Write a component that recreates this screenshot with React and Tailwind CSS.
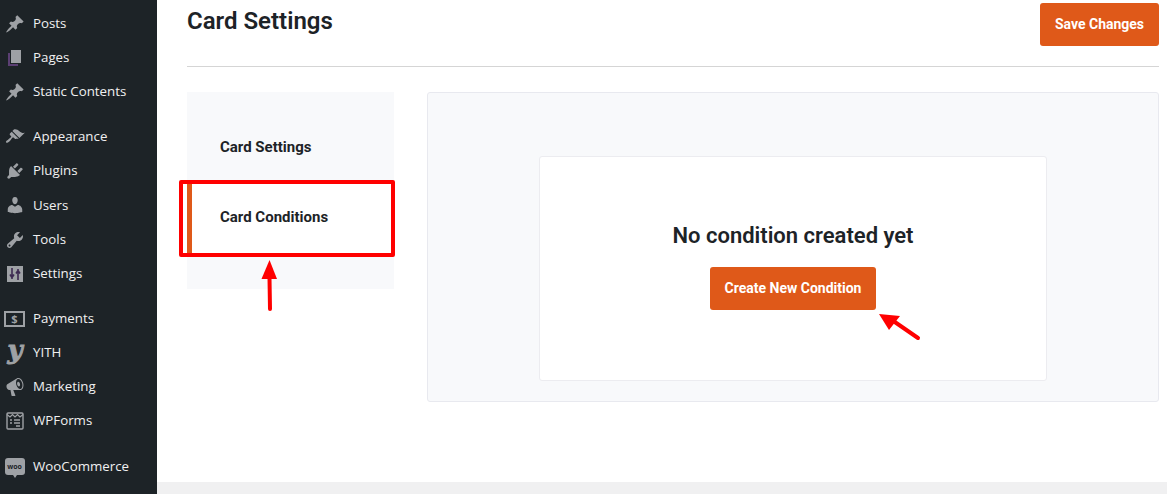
const Dash = ({ d, size = 20, extra }) => (
  <svg width={size} height={size} viewBox="0 0 20 20" fill="currentColor">
    <path d={d} />
    {extra}
  </svg>
);

const PIN = 'M10.44 3.02l1.82-1.82 6.36 6.35-1.83 1.82c-1.05-.68-2.48-.57-3.41.36l-.75.75c-.92.93-1.04 2.35-.35 3.41l-1.83 1.82-2.41-2.41-2.8 2.79c-.42.42-3.38 2.71-3.8 2.29s1.86-3.39 2.28-3.81l2.79-2.79L4.1 9.36l1.83-1.82c1.05.69 2.48.57 3.4-.36l.75-.75c.93-.92 1.05-2.35.36-3.41z';
const BRUSH = 'M14.48 11.06L7.41 3.99l1.5-1.5c.5-.56 2.3-.47 3.51.32 1.21.8 1.43 1.28 2.91 2.1 1.18.64 2.45 1.26 4.45.85zm-.71.71L6.7 4.7 4.93 6.47c-.39.39-.39 1.02 0 1.41l1.06 1.06c.39.39.39 1.03 0 1.42-.6.6-1.43 1.11-2.21 1.69-.35.26-.7.53-1.01.84C1.43 13.23.4 14.85 1.15 15.6c.75.75 2.37-.28 3.71-1.62.31-.31.58-.66.84-1.01.58-.78 1.09-1.61 1.69-2.21.39-.39 1.02-.39 1.41 0l1.06 1.06c.39.39 1.02.39 1.41 0z';
const PLUG = 'M13.11 4.36L9.87 7.6 8 5.73l3.24-3.24c.35-.34 1.05-.2 1.56.32.52.51.66 1.21.31 1.55zm-8 1.77l.91-1.12 9.01 9.01-1.19.84c-.71.71-2.63 1.16-3.82 1.16H6.14L4.9 17.26c-.59.59-1.54.59-2.12 0-.59-.58-.59-1.53 0-2.12l1.24-1.24v-3.88c0-1.13.4-3.19 1.09-3.89zm7.26 3.97l3.24-3.24c.34-.35 1.04-.21 1.55.31.52.51.66 1.21.31 1.55l-3.24 3.25z';
const USER = 'M10 9.25c-2.27 0-2.73-3.44-2.73-3.44C7 4.02 7.82 2 9.97 2c2.16 0 2.98 2.02 2.71 3.81 0 0-.41 3.44-2.68 3.44zm0 2.57L12.72 10c2.39 0 4.52 2.33 4.52 4.53v2.49s-3.65 1.13-7.24 1.13c-3.65 0-7.24-1.13-7.24-1.13v-2.49c0-2.25 1.94-4.48 4.47-4.48z';
const WRENCH = 'M16.68 9.77c-1.34 1.34-3.3 1.67-4.95.99l-5.41 6.52c-.99.99-2.59.99-3.58 0s-.99-2.59 0-3.57l6.52-5.42c-.68-1.65-.35-3.61.99-4.95 1.28-1.28 3.12-1.62 4.72-1.06l-2.89 2.89 2.82 2.82 2.86-2.87c.53 1.58.18 3.39-1.08 4.65zM3.81 16.21c.4.39 1.04.39 1.43 0 .4-.4.4-1.04 0-1.43-.39-.4-1.03-.4-1.43 0-.39.39-.39 1.03 0 1.43z';
const MEGAPHONE = 'M18.15 5.94c.46 1.62.38 3.22-.02 4.48-.42 1.28-1.26 2.18-2.3 2.48-.16.06-.26.06-.4.06-.06.02-.12.02-.18.02-.06.02-.14.02-.22.02h-6.8l2.22 5.5c.02.14-.06.26-.14.34-.08.1-.24.16-.34.16H6.95c-.1 0-.26-.06-.34-.16-.08-.08-.16-.2-.14-.34l-1-5.5H4.25l-.02-.02c-.5.06-1.08-.18-1.54-.62s-.88-1.08-1.06-1.88c-.24-.8-.2-1.56-.02-2.2.18-.62.58-1.08 1.06-1.3l.02-.02 9-5.4c.1-.06.18-.1.24-.16.06-.04.14-.08.24-.12.16-.08.28-.12.5-.18 1.04-.3 2.24.1 3.22 1 .98.88 1.8 2.24 2.26 3.86zm-2.58 5.98h-.02c.4-.1.74-.34 1.04-.7.58-.7.86-1.76.86-3.04-.02-.64-.1-1.3-.28-1.98-.34-1.36-1.02-2.5-1.78-3.24s-1.68-1.1-2.46-.88c-.82.22-1.4.96-1.7 2-.32 1.04-.28 2.36.06 3.72.38 1.36 1 2.52 1.8 3.24.78.74 1.62 1.1 2.48.88zm-2.54-7.08c.22-.04.42-.02.62.04.38.16.76.48 1.02 1s.42 1.2.42 1.78c0 .3-.04.56-.12.8-.18.48-.44.84-.86.94-.34.1-.8-.06-1.14-.4s-.64-.86-.78-1.5c-.18-.62-.12-1.24.02-1.72s.48-.84.82-.94z';

const PagesIcon = () => (
  <svg width="20" height="20" viewBox="0 0 20 20">
    <path d="M5 16h8v2H3V5h2z" fill="#5b3f73" />
    <path d="M6 15V2h10v13z" fill="currentColor" />
  </svg>
);

const SettingsIcon = () => (
  <svg width="20" height="20" viewBox="0 0 20 20">
    <path d="M2 2h16v16H2z" fill="currentColor" />
    <path d="M7 4v11M5 10.5l2 3 2-3M13 16V5M11 9.5l2-3 2 3" stroke="#3d2a52" strokeWidth="1.6" fill="none" />
  </svg>
);

const PaymentsIcon = () => (
  <div className="-ml-[1px] flex h-[16px] w-[21px] items-center justify-center border-2 border-current text-[11px] leading-none font-bold">
    <span>$</span>
  </div>
);

const YithIcon = () => (
  <span className="-mt-[7px] font-['DejaVu_Serif',serif] text-[26px] leading-none font-bold italic [-webkit-text-stroke:1px_currentColor]">y</span>
);

const FormsIcon = () => (
  <svg width="18" height="18" viewBox="0 0 18 18" fill="none" stroke="currentColor">
    <rect x="1" y="1" width="16" height="16" rx="1" strokeWidth="1.4" />
    <path d="M1 2.5l3 2.5 2.5-2.5L9 5l2.5-2.5L14 5l3-2.5" strokeWidth="1.2" />
    <path d="M4 8h2M8 8h6M4 11h2M8 11h6M10 14h4" strokeWidth="1.6" />
  </svg>
);

const WooIcon = () => (
  <div className="relative -ml-[1px] flex h-[17px] w-[20px] items-center justify-center rounded-[3px] bg-[#9ea1a5]">
    <span className="text-[7px] leading-none font-bold text-[#1d2327]">woo</span>
    <div className="absolute -bottom-[3px] left-[8px] h-0 w-0 border-x-[2px] border-t-[3px] border-x-transparent border-t-[#9ea1a5]" />
  </div>
);

const menuGroups = [
  [
    { label: 'Posts', icon: <Dash d={PIN} /> },
    { label: 'Pages', icon: <PagesIcon /> },
    { label: 'Static Contents', icon: <Dash d={PIN} /> },
  ],
  [
    { label: 'Appearance', icon: <Dash d={BRUSH} /> },
    { label: 'Plugins', icon: <Dash d={PLUG} /> },
    { label: 'Users', icon: <Dash d={USER} /> },
    { label: 'Tools', icon: <Dash d={WRENCH} /> },
    { label: 'Settings', icon: <SettingsIcon /> },
  ],
  [
    { label: 'Payments', icon: <PaymentsIcon /> },
    { label: 'YITH', icon: <YithIcon /> },
    { label: 'Marketing', icon: <Dash d={MEGAPHONE} /> },
    { label: 'WPForms', icon: <FormsIcon /> },
  ],
  [{ label: 'WooCommerce', icon: <WooIcon /> }],
];

const Sidebar = () => (
  <aside className="flex h-[494px] w-[157px] shrink-0 flex-col gap-[10.85px] overflow-hidden bg-[#1d2327] pt-[6.6px] font-['Open_Sans',sans-serif] text-[13.3px] text-[#f0f0f1]">
    {menuGroups.map((group, i) => (
      <div key={i} className="flex flex-col">
        {group.map((item) => (
          <div key={item.label} className="flex h-[34.2px] items-center">
            <div className="flex w-[33px] justify-center pr-[3px] text-[#9ea1a5]">{item.icon}</div>
            <span>{item.label}</span>
          </div>
        ))}
      </div>
    ))}
  </aside>
);

const RedArrow = ({ className, x1, y1, x2, y2, points, width, height }) => (
  <svg className={className} width={width} height={height}>
    <line x1={x1} y1={y1} x2={x2} y2={y2} stroke="#ff0000" strokeWidth="4" strokeLinecap="round" />
    <polygon points={points} fill="#ff0000" />
  </svg>
);

export default function App() {
  return (
    <div className="relative flex h-[494px] w-[1167px] overflow-hidden bg-white font-['Roboto',sans-serif] text-[#1d2327]">
      <Sidebar />
      <main className="flex flex-1 flex-col">
        <div className="flex-1 pr-[8px] pl-[30px]">
          <div className="flex h-[67px] items-start justify-between border-b border-[#d5d5d5] pt-[3px]">
            <h1 className="-mt-[3px] text-[24px] leading-[42px] font-semibold">Card Settings</h1>
            <button className="h-[43px] w-[119px] rounded-[3px] bg-[#df5919] text-[14px] font-bold text-white">
              Save Changes
            </button>
          </div>
          <div className="mt-[25px] flex items-start gap-[33px]">
            <nav className="flex h-[197px] w-[207px] flex-col bg-[#f8f9fb] pt-[20px] text-[15px] font-bold">
              <div className="flex h-[69px] items-center pt-[1px] pl-[33px]">Card Settings</div>
              <div className="flex h-[72px] items-center border-l-[5px] border-[#df5919] bg-white pl-[28px]">Card Conditions</div>
            </nav>
            <section className="flex h-[310px] flex-1 items-start justify-center rounded-[3px] border border-[#e8e9ef] bg-[#f8f9fb] pt-[63px]">
              <div className="flex h-[225px] w-[508px] flex-col items-center rounded-[3px] border border-[#ececf0] bg-white pt-[63px]">
                <h2 className="text-[22px] leading-[32px] font-semibold">No condition created yet</h2>
                <button className="mt-[15px] h-[43px] w-[166px] rounded-[3px] bg-[#df5919] text-[14px] font-bold text-white">
                  Create New Condition
                </button>
              </div>
            </section>
          </div>
        </div>
        <div className="h-[12px] bg-[#f0f0f1]" />
      </main>

      {/* annotations */}
      <div className="absolute top-[180px] left-[179px] h-[77px] w-[216px] rounded-[2px] border-4 border-[#ff0000]" />
      <RedArrow className="absolute top-[260px] left-[260px]" width={20} height={54} x1={9.5} y1={18} x2={10} y2={49} points="9.5,0 1.5,19 17,19" />
      <RedArrow className="absolute top-[310px] left-[875px]" width={50} height={34} x1={14} y1={8} x2={43} y2={28} points="4,4 25,6 14,20" />
    </div>
  );
}
